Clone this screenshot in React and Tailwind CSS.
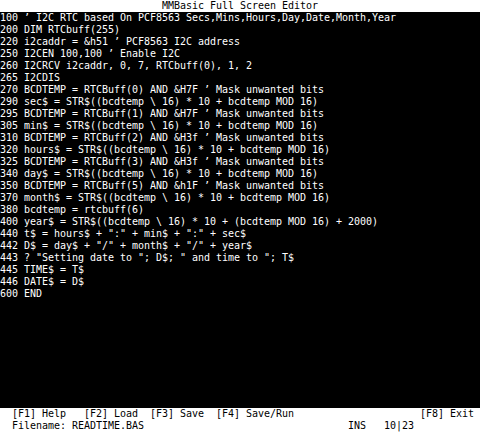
const lines = [
  "100 ’ I2C RTC based On PCF8563 Secs,Mins,Hours,Day,Date,Month,Year",
  "200 DIM RTCbuff(255)",
  "220 i2caddr = &h51 ’ PCF8563 I2C address",
  "250 I2CEN 100,100 ’ Enable I2C",
  "260 I2CRCV i2caddr, 0, 7, RTCbuff(0), 1, 2",
  "265 I2CDIS",
  "270 BCDTEMP = RTCBuff(0) AND &H7F ’ Mask unwanted bits",
  "290 sec$ = STR$((bcdtemp \\ 16) * 10 + bcdtemp MOD 16)",
  "295 BCDTEMP = RTCBuff(1) AND &H7F ’ Mask unwanted bits",
  "305 min$ = STR$((bcdtemp \\ 16) * 10 + bcdtemp MOD 16)",
  "310 BCDTEMP = RTCBuff(2) AND &H3f ’ Mask unwanted bits",
  "320 hours$ = STR$((bcdtemp \\ 16) * 10 + bcdtemp MOD 16)",
  "325 BCDTEMP = RTCBuff(3) AND &H3f ’ Mask unwanted bits",
  "340 day$ = STR$((bcdtemp \\ 16) * 10 + bcdtemp MOD 16)",
  "350 BCDTEMP = RTCBuff(5) AND &h1F ’ Mask unwanted bits",
  "370 month$ = STR$((bcdtemp \\ 16) * 10 + bcdtemp MOD 16)",
  "380 bcdtemp = rtcbuff(6)",
  "400 year$ = STR$((bcdtemp \\ 16) * 10 + (bcdtemp MOD 16) + 2000)",
  "440 t$ = hours$ + \":\" + min$ + \":\" + sec$",
  "442 D$ = day$ + \"/\" + month$ + \"/\" + year$",
  "443 ? \"Setting date to \"; D$; \" and time to \"; T$",
  "445 TIME$ = T$",
  "446 DATE$ = D$",
  "600 END",
];

// 6px cells, 12px rows, like the editor's 80x36 character grid
const mono = "font-['DejaVu_Sans_Mono',monospace] text-[10px] leading-[12px] tracking-[-0.02px] whitespace-pre";

export default function App() {
  return (
    <div className={`flex h-[432px] w-[480px] flex-col bg-black ${mono}`}>
      <div className="h-[12px] bg-white text-center text-black">MMBasic Full Screen Editor</div>
      <div className="flex-1 bg-black text-white">
        {lines.map((line, i) => (
          <div key={i} className="h-[12px]">{line}</div>
        ))}
      </div>
      <div className="bg-white text-black">
        <div className="flex h-[12px] justify-between">
          <span>{"  [F1] Help   [F2] Load  [F3] Save  [F4] Save/Run"}</span>
          <span>{"[F8] Exit "}</span>
        </div>
        <div className="flex h-[12px]">
          <span className="w-[348px]">{"  Filename: READTIME.BAS"}</span>
          <span className="w-[36px]">INS</span>
          <span>10|23</span>
        </div>
      </div>
    </div>
  );
}
